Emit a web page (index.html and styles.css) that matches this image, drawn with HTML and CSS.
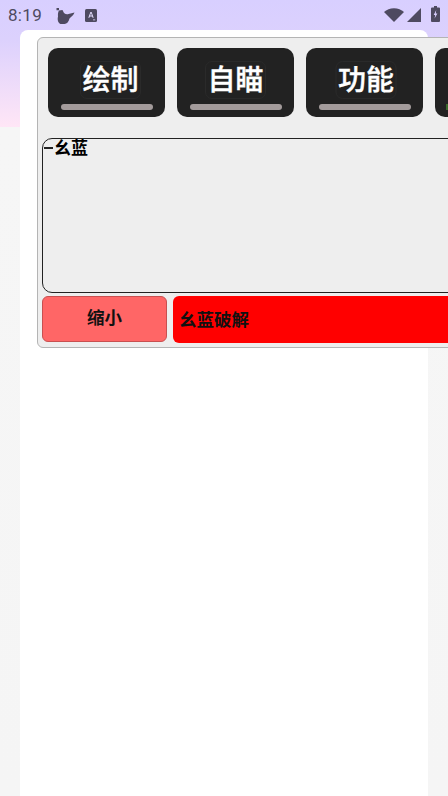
FILE: index.html
```
<!DOCTYPE html>
<html lang="zh">
<head>
<meta charset="utf-8">
<title>幺蓝</title>
<link rel="stylesheet" href="styles.css">
</head>
<body>
<div class="screen">
  <div class="status">
    <div class="status-left">
      <span class="time">8:19</span>
      <svg class="ic-bird" viewBox="0 0 20 16"><path d="M.5 0h2.500v2.200H.5zM3 2.500 6.500 2l1.500 3c1.500 1.200 3 1.500 4.500 1L18.500 4.500c-.8 2.500-3 4-5 6-.8 3-2.500 5.500-5 5.500H4.500C2 15 1.200 11.500 2 8.500 1.800 6 2 4 3 2.500z"/></svg>
      <svg class="ic-a" viewBox="0 0 12 13"><rect width="12" height="13" rx="1.500"/><path class="ic-a-mark" d="M3.300 8.800 5.400 3h1.200l2.100 5.800H7.600l-.4-1.300H4.800l-.4 1.300zM5.100 6.500h1.800L6 4.100zM8 10.500h2.200v.8H8z"/></svg>
    </div>
    <div class="status-right">
      <svg class="ic-wifi" viewBox="0 0 20 14"><path d="M0 4C2.700 1.500 6 .2 10 .2S17.300 1.500 20 4L10 14z"/></svg>
      <svg class="ic-signal" viewBox="0 0 14 14"><path d="M14 0v14H0z"/></svg>
      <svg class="ic-batt" viewBox="0 0 9 16"><path fill-rule="evenodd" d="M3 0h3v1.500h2a1 1 0 0 1 1 1V15a1 1 0 0 1-1 1H1a1 1 0 0 1-1-1V2.500a1 1 0 0 1 1-1h2zM5.200 4 2.700 9h1.500l-.6 3.400L6.400 7.500H4.800z"/></svg>
    </div>
  </div>
  <div class="sheet"></div>
  <div class="panel">
    <div class="tabs">
      <div class="tab tab-a"><span class="tab-label">绘制</span><span class="tab-bar"></span></div>
      <div class="tab"><span class="tab-label">自瞄</span><span class="tab-bar"></span></div>
      <div class="tab tab-c"><span class="tab-label">功能</span><span class="tab-bar"></span></div>
      <div class="tab"><span class="tab-dot"></span></div>
    </div>
    <div class="group">
      <div class="group-head"><span class="group-dash"></span><span class="group-title">幺蓝</span></div>
    </div>
    <div class="actions">
      <button class="btn-shrink">缩小</button>
      <div class="btn-title">幺蓝破解</div>
    </div>
  </div>
</div>
</body>
</html>
```
FILE: styles.css
```
* { box-sizing: border-box; }
html, body { margin: 0; height: 100%; }
body { font-family: "Noto Sans CJK SC", "Noto Sans", sans-serif; overflow: hidden; }
.screen {
  position: relative;
  width: 448px;
  height: 796px;
  overflow: hidden;
  background: linear-gradient(#d8cfff 0, #dcd1fd 40px, #ffe6f6 127px, #f6f6f6 127px, #f5f5f5 100%);
}
.status {
  height: 30px;
  display: flex;
  justify-content: space-between;
  align-items: center;
  padding: 0 8px 0 8px;
  color: #4e4a60;
}
.status svg { fill: #4e4a60; display: block; }
.status-left, .status-right { display: flex; align-items: center; }
.time { font-family: Roboto, sans-serif; font-size: 17px; line-height: 30px; letter-spacing: .3px; width: 48px; }
.ic-bird { width: 20px; height: 16px; margin-top: 1px; }
.status-left .ic-a { width: 12px; height: 13px; margin-left: 9px; }
.status svg .ic-a-mark { fill: #e6e0ff; }
.ic-wifi { width: 20px; height: 14px; }
.ic-signal { width: 14px; height: 14px; margin-left: 3px; }
.ic-batt { width: 9px; height: 16px; margin-left: 10px; margin-top: -2px; }
.sheet {
  position: absolute;
  left: 20px;
  top: 30px;
  width: 408px;
  height: 766px;
  background: #fff;
  border-radius: 8px 8px 0 0;
}
.panel {
  position: absolute;
  left: 37px;
  top: 37px;
  width: 560px;
  height: 311px;
  background: #eeeeee;
  border: 1px solid #b4b4b4;
  border-radius: 6px;
  padding: 10px 4px 0;
}
.tabs { display: flex; gap: 12px; padding-left: 6px; }
.tab {
  position: relative;
  flex: none;
  width: 117px;
  height: 69px;
  background: #222222;
  border-radius: 10px;
  display: flex;
  flex-direction: column;
  align-items: center;
  padding-top: 13px;
}
.tab-label {
  width: 61px;
  height: 38px;
  border: 1px solid #2a2a2a;
  border-radius: 7px;
  color: #fff;
  font-size: 28px;
  font-weight: 500;
  -webkit-text-stroke: .4px #fff;
  line-height: 32px;
  text-align: center;
  white-space: nowrap;
  display: flex;
  justify-content: center;
}
.tab-a .tab-label { transform: translateX(4px); }
.tab-c .tab-label { transform: translateX(1.500px); }
.tab-bar {
  width: 92px;
  height: 6px;
  margin-top: 5px;
  border-radius: 3px;
  background: #a39b9b;
}
.tab-dot {
  position: absolute;
  left: 11px;
  top: 56px;
  width: 4px;
  height: 6px;
  background: #3a6a2a;
}
.group {
  margin: 21px 0 0;
  width: 520px;
  height: 155px;
  border: 1px solid #222;
  border-radius: 10px;
}
.group-head { display: flex; align-items: center; height: 16px; }
.group-dash { width: 9px; height: 2px; margin-left: 1px; margin-right: 1px; background: #222; margin-top: 2px; }
.group-title {
  font-size: 17px;
  font-weight: 700;
  line-height: 16px;
  color: #000;
}
.actions { display: flex; gap: 6px; margin-top: 3px; align-items: flex-start; }
.btn-shrink {
  flex: none;
  width: 125px;
  height: 46px;
  background: #ff6666;
  border: 1px solid #c85050;
  border-radius: 6px;
  color: #111;
  font: 700 17.500px/40px "Noto Sans CJK SC", sans-serif;
  padding: 0 0 4px;
}
.btn-title {
  flex: none;
  width: 380px;
  height: 47px;
  background: #ff0000;
  border-radius: 6px;
  color: #111;
  font-size: 17.500px;
  font-weight: 700;
  line-height: 46px;
  padding-left: 6px;
}
```
